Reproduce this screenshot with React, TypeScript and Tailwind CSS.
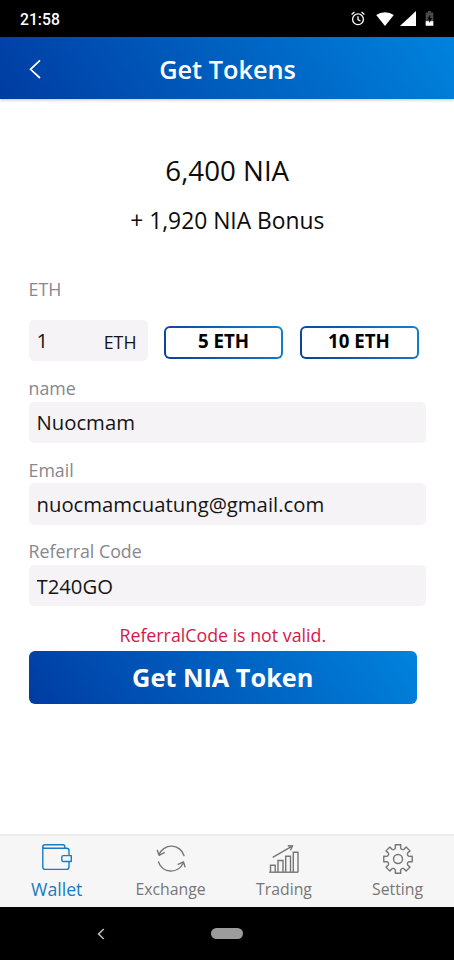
import { useState } from 'react';
import type { ReactNode } from 'react';

// Eight rounded teeth around a 30x30 box
const gearPath = (() => {
  const point = (r: number, a: number) =>
    `${(15 + r * Math.cos(a)).toFixed(2)} ${(15 + r * Math.sin(a)).toFixed(2)}`;
  let d = '';
  for (let i = 0; i < 8; i++) {
    const a = (i * Math.PI) / 4 - Math.PI / 2;
    d += `${i === 0 ? 'M' : 'L'}${point(11.4, a - 0.23)} L${point(14.5, a - 0.19)} L${point(14.5, a + 0.19)} L${point(11.4, a + 0.23)} `;
    d += `Q${point(9.4, a + Math.PI / 8)} ${point(11.4, a + Math.PI / 4 - 0.23)} `;
  }
  return d + 'Z';
})();

function WalletIcon() {
  return (
    <svg width="30" height="30" viewBox="0 0 30 30" fill="none" stroke="currentColor" strokeWidth="1.4" strokeLinejoin="round">
      <path d="M27 11.5V6.5Q27 4.3 24.8 4.3H2.8Q.8 4.3 .8 2.6V23Q.8 25.4 3.2 25.4H24.6Q27 25.4 27 23V17.5" />
      <path d="M.8 3V2.6Q.8.8 2.8.8H21Q22.8.8 22.8 2.6V4.3" />
      <path d="M21.3 11.6H29.3V17.5H21.3Q19.8 17.5 19.8 16V13.1Q19.8 11.6 21.3 11.6Z" />
    </svg>
  );
}

function ExchangeIcon() {
  return (
    <svg width="30" height="30" viewBox="0 0 30 30" fill="none" stroke="currentColor" strokeWidth="1.4" strokeLinecap="round" strokeLinejoin="round">
      <path d="M28 11.5A13.2 13.2 0 0 0 3.1 10.5" />
      <path d="M1.3 6.3L3.1 11.3L8.2 8.6" />
      <path d="M2.5 18A13.2 13.2 0 0 0 27.2 19" />
      <path d="M29 22.7L27.4 17.8L22.1 20.3" />
    </svg>
  );
}

function TradingIcon() {
  return (
    <svg width="30" height="30" viewBox="0 0 30 30" fill="none" stroke="currentColor" strokeWidth="1.4">
      <path d="M.2 28.2H29.3" />
      <path d="M1.5 28V21.2H6.2V28M9 28V16.5H14V28M16.7 28V12.3H21.5V28M24.3 28V8.2H29V28" />
      <path d="M3.7 13.4L23.2 2.2M18.8 1.8L23.5 2L21.5 6.2" />
    </svg>
  );
}

function SettingIcon() {
  return (
    <svg width="30" height="30" viewBox="0 0 30 30" fill="none" stroke="currentColor" strokeWidth="1.4" strokeLinejoin="round">
      <path d={gearPath} />
      <circle cx="15" cy="15" r="4.5" />
    </svg>
  );
}

function StatusBar() {
  return (
    <div className="flex h-[37px] items-center justify-between bg-black pl-5 pr-5 text-white">
      <span className="pt-0.5 font-[Roboto] text-[15.7px] font-medium">21:58</span>
      <div className="flex items-center">
        <svg width="14" height="15" viewBox="0 0 14 15" fill="none" stroke="white" strokeWidth="1.3">
          <circle cx="7" cy="8.3" r="5.4" />
          <path d="M7 5.2V8.6L9.4 10M.6 3.4L3.4 1M13.4 3.4L10.6 1" />
        </svg>
        <svg className="ml-[11px]" width="18" height="14" viewBox="0 0 18 14" fill="white">
          <path d="M9 14L.2 3Q4 .3 9 .3T17.8 3Z" />
        </svg>
        <svg className="ml-[6px]" width="16" height="15" viewBox="0 0 16 15" fill="white">
          <path d="M16 0V15H0Z" />
        </svg>
        <svg className="ml-[9px]" width="9" height="15" viewBox="0 0 9 15">
          <path d="M3 0H6V1.5H8.3V14.7H.7V1.5H3Z" fill="#4a4a4a" />
          <path d="M.7 10.2H8.3V14.7H.7Z" fill="white" />
          <path d="M5.2 3.4L2.3 8.6H4.1V12L7 6.9H5.2Z" fill="black" />
        </svg>
      </div>
    </div>
  );
}

function Field({ label, value, onChange }: { label: string; value: string; onChange: (v: string) => void }) {
  return (
    <label className="block h-[81.7px]">
      <span className="block h-[26.5px] text-[17.8px] leading-[27px] text-[#88868e]">{label}</span>
      <input
        className="block h-[41.5px] w-full rounded-[5px] bg-[#f5f3f6] px-2 text-[20.3px] text-[#151515] outline-none"
        value={value}
        onChange={(e) => onChange(e.target.value)}
      />
    </label>
  );
}

function AmountButton({ children, onClick }: { children: ReactNode; onClick: () => void }) {
  return (
    <button onClick={onClick} className="h-[33px] w-[119px] rounded-[6px] bg-[linear-gradient(60deg,#0d3f98,#1480cc)] p-[2px]">
      <span className="flex h-full items-center justify-center rounded-[4px] bg-white pb-[2px] text-[18.7px] font-bold text-black">
        {children}
      </span>
    </button>
  );
}

const tabs = [
  { name: 'Wallet', icon: <WalletIcon /> },
  { name: 'Exchange', icon: <ExchangeIcon /> },
  { name: 'Trading', icon: <TradingIcon /> },
  { name: 'Setting', icon: <SettingIcon /> },
];

export default function App() {
  const [amount, setAmount] = useState('1');
  const [name, setName] = useState('Nuocmam');
  const [email, setEmail] = useState('nuocmamcuatung@gmail.com');
  const [code, setCode] = useState('T240GO');
  const [activeTab, setActiveTab] = useState('Wallet');

  return (
    <div className="flex h-[960px] w-[454px] flex-col overflow-hidden bg-white font-['Open_Sans',sans-serif]">
      <StatusBar />

      {/* Header */}
      <header className="grid h-[62px] shrink-0 grid-cols-[60px_1fr_60px] items-center bg-[linear-gradient(55deg,#003ca2,#0083dd)] text-white shadow-[0_1px_3px_rgba(60,50,70,0.3)]">
        <button className="pl-[29px] pt-[2px]">
          <svg width="12" height="20" viewBox="0 0 12 20" fill="none" stroke="white" strokeWidth="1.7">
            <path d="M11 1.3L1.5 10.3L11 19" />
          </svg>
        </button>
        <h1 className="pl-[1px] pt-[3px] text-center text-[25.3px] font-semibold">Get Tokens</h1>
      </header>

      <main className="flex-1 pl-[28.5px] pr-[28px]">
        <div className="pt-[49px] text-center text-[#0c0c0c]">
          <p className="text-[27.7px] leading-[44px]">6,400 NIA</p>
          <p className="pt-[9px] text-[22.8px] leading-[40px]">+ 1,920 NIA Bonus</p>
        </div>

        {/* Amount */}
        <p className="mt-[35px] text-[17.8px] leading-[27px] text-[#88868e]">ETH</p>
        <div className="mt-[16.5px] flex items-center gap-[16.5px]">
          <label className="flex h-[41.5px] w-[119px] items-center rounded-[5px] bg-[#f5f3f6] px-2 text-[#151515]">
            <input
              className="w-[60px] text-[20.3px] outline-none"
              value={amount}
              onChange={(e) => setAmount(e.target.value)}
            />
            <span className="ml-auto pr-[3px] pt-[4px] text-[17.8px]">ETH</span>
          </label>
          <div className="flex gap-[16.5px] pt-[4px]">
            <AmountButton onClick={() => setAmount('5')}>5 ETH</AmountButton>
            <AmountButton onClick={() => setAmount('10')}>10 ETH</AmountButton>
          </div>
        </div>

        <div className="mt-[14px]">
          <Field label="name" value={name} onChange={setName} />
          <Field label="Email" value={email} onChange={setEmail} />
          <Field label="Referral Code" value={code} onChange={setCode} />
        </div>

        <p className="mt-[2px] pr-[9px] text-center text-[17.8px] leading-[26px] text-[#d4184c]">ReferralCode is not valid.</p>
        <button className="mt-[3px] block h-[53px] w-[388.5px] rounded-[6px] bg-[linear-gradient(55deg,#003ca2,#0083dd)] pt-[1px] text-[25.3px] font-bold text-white">
          Get NIA Token
        </button>
      </main>

      {/* Tab bar */}
      <nav className="grid h-[73px] shrink-0 grid-cols-4 border-t-2 border-[#ebebeb] bg-[#f6f6f6]">
        {tabs.map((tab) => (
          <button
            key={tab.name}
            onClick={() => setActiveTab(tab.name)}
            className={
              tab.name === activeTab
                ? 'flex flex-col items-center pt-[8px] text-[17.7px] leading-[30px] text-[#187bc4]'
                : 'flex flex-col items-center pl-[0.5px] pt-[8px] text-[15.8px] leading-[31px] text-[#767676]'
            }
          >
            {tab.icon}
            {tab.name}
          </button>
        ))}
      </nav>

      {/* System navigation */}
      <div className="grid h-[53px] shrink-0 grid-cols-[1fr_32px_1fr] items-center bg-black">
        <svg className="ml-[97px]" width="8" height="12" viewBox="0 0 8 12" fill="none" stroke="#b5b5b5" strokeWidth="1.7">
          <path d="M6.8 1L1.6 6L6.8 11" />
        </svg>
        <div className="h-[11px] rounded-full bg-[#9c9c9c]" />
      </div>
    </div>
  );
}
